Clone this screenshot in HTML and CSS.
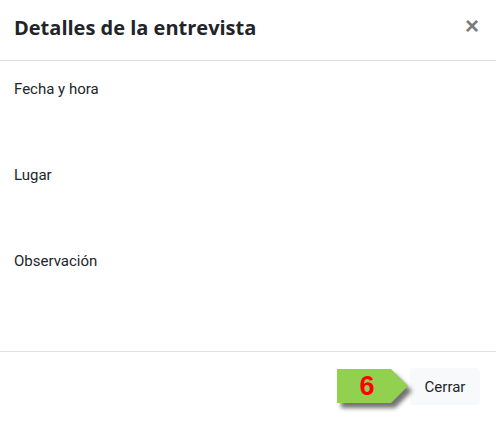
FILE: index.html
```html
<!DOCTYPE html>
<html lang="es">
<head>
<meta charset="utf-8">
<link rel="stylesheet" href="styles.css">
</head>
<body>
<div class="modal">
  <div class="modal-header">
    <h5 class="modal-title">Detalles de la entrevista</h5>
    <button class="close" type="button">&times;</button>
  </div>
  <div class="modal-body">
    <div class="field"><div class="label">Fecha y hora</div></div>
    <div class="field"><div class="label">Lugar</div></div>
    <div class="field"><div class="label">Observación</div></div>
  </div>
  <div class="modal-footer">
    <div class="step">
      <svg class="step-shape" width="80" height="42" viewBox="0 0 80 42">
        <polygon points="0,0 54,0 71,17 54,34 0,34" fill="#92d050"/>
      </svg>
      <span class="step-num">6</span>
    </div>
    <button class="btn" type="button">Cerrar</button>
  </div>
</div>
</body>
</html>
```
FILE: styles.css
```css
* { box-sizing: border-box; }
html, body { margin: 0; padding: 0; background: #fff; }
.modal {
  width: 496px;
  height: 435px;
  display: flex;
  flex-direction: column;
  background: #fff;
}
.modal-header {
  height: 61px;
  padding: 0 14px;
  display: flex;
  align-items: center;
  justify-content: space-between;
  border-bottom: 1px solid #dee2e6;
}
.modal-title {
  margin: 0;
  font-family: "Open Sans", sans-serif;
  font-weight: 700;
  font-size: 20px;
  line-height: 24px;
  color: #212529;
  padding-bottom: 4px;
}
.close {
  border: 0;
  background: transparent;
  padding: 0;
  margin-right: 3px;
  font-family: "Liberation Sans", Arial, sans-serif;
  font-weight: 700;
  font-size: 24px;
  line-height: 24px;
  color: #7b7b7b;
  margin-bottom: 8px;
}
.modal-body {
  height: 291px;
  padding: 17px 14px 0;
  border-bottom: 1px solid #dee2e6;
}
.field {
  height: 86px;
}
.label {
  font-family: Roboto, sans-serif;
  font-size: 15px;
  line-height: 22px;
  color: #212529;
}
.modal-footer {
  display: flex;
  justify-content: flex-end;
  align-items: flex-start;
  padding: 16px 16px 0 0;
}
.step {
  position: relative;
  width: 76px;
  height: 42px;
  margin-top: 1px;
  margin-right: -3px;
}
.step-shape {
  position: absolute;
  left: 0;
  top: 0;
  filter: drop-shadow(4px 5px 2px rgba(0, 0, 0, 0.55));
}
.step-num {
  position: absolute;
  left: 0;
  top: 0;
  width: 60px;
  height: 35px;
  display: flex;
  align-items: center;
  justify-content: center;
  font-family: "Liberation Sans", Arial, sans-serif;
  font-weight: 700;
  font-size: 27px;
  color: #ff0000;
}
.btn {
  width: 70px;
  height: 37px;
  border: 0;
  border-radius: 4px;
  background: #f8f9fa;
  font-family: Roboto, sans-serif;
  font-size: 15px;
  color: #212529;
  padding: 0;
}
```
